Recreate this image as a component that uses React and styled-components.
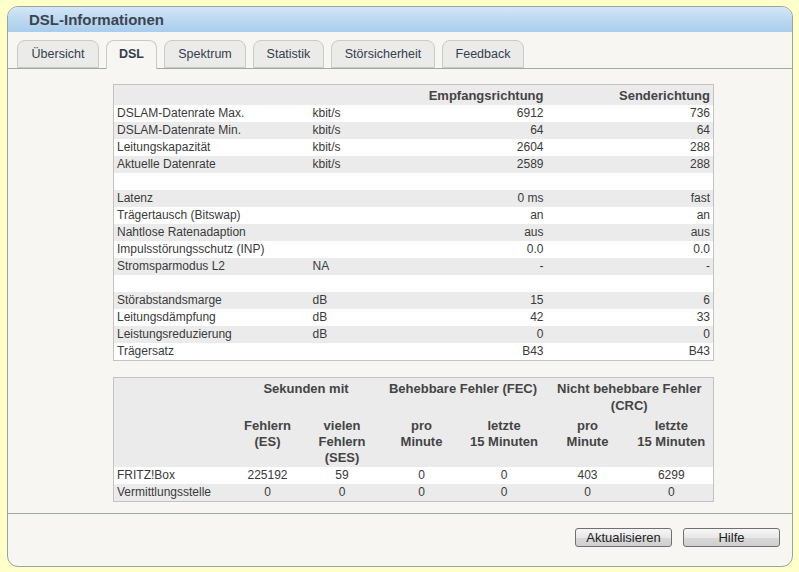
import React from 'react';
import styled, { createGlobalStyle } from 'styled-components';

const GlobalStyle = createGlobalStyle`
  html, body {
    margin: 0;
    padding: 0;
    background: #ffffc9;
    font-family: "Liberation Sans", Arial, sans-serif;
  }
`;

const tabs = ['Übersicht', 'DSL', 'Spektrum', 'Statistik', 'Störsicherheit', 'Feedback'];
const tabWidths = [82, 51, 82, 71, 104, 82];

const mainRows = [
  { label: 'DSLAM-Datenrate Max.', unit: 'kbit/s', rx: '6912', tx: '736' },
  { label: 'DSLAM-Datenrate Min.', unit: 'kbit/s', rx: '64', tx: '64' },
  { label: 'Leitungskapazität', unit: 'kbit/s', rx: '2604', tx: '288' },
  { label: 'Aktuelle Datenrate', unit: 'kbit/s', rx: '2589', tx: '288' },
  { label: '', unit: '', rx: '', tx: '' },
  { label: 'Latenz', unit: '', rx: '0 ms', tx: 'fast' },
  { label: 'Trägertausch (Bitswap)', unit: '', rx: 'an', tx: 'an' },
  { label: 'Nahtlose Ratenadaption', unit: '', rx: 'aus', tx: 'aus' },
  { label: 'Impulsstörungsschutz (INP)', unit: '', rx: '0.0', tx: '0.0' },
  { label: 'Stromsparmodus L2', unit: 'NA', rx: '-', tx: '-' },
  { label: '', unit: '', rx: '', tx: '' },
  { label: 'Störabstandsmarge', unit: 'dB', rx: '15', tx: '6' },
  { label: 'Leitungsdämpfung', unit: 'dB', rx: '42', tx: '33' },
  { label: 'Leistungsreduzierung', unit: 'dB', rx: '0', tx: '0' },
  { label: 'Trägersatz', unit: '', rx: 'B43', tx: 'B43' },
];

const errorRows = [
  { label: 'FRITZ!Box', values: ['225192', '59', '0', '0', '403', '6299'] },
  { label: 'Vermittlungsstelle', values: ['0', '0', '0', '0', '0', '0'] },
];

const App = () => {
  return (
    <>
      <GlobalStyle />
      <Frame>
        <Header>DSL-Informationen</Header>
        <TabBar>
          {tabs.map((t, i) => (
            <Tab key={t} active={t === 'DSL'} w={tabWidths[i]}>{t}</Tab>
          ))}
        </TabBar>
        <Content>
          <DataTable>
            <colgroup>
              <col style={{ width: 196 }} />
              <col style={{ width: 100 }} />
              <col style={{ width: 137 }} />
              <col style={{ width: 167 }} />
            </colgroup>
            <thead>
              <tr>
                <HeadCell />
                <HeadCell />
                <HeadCell align="right">Empfangsrichtung</HeadCell>
                <HeadCell align="right">Senderichtung</HeadCell>
              </tr>
            </thead>
            <tbody>
              {mainRows.map((r, i) => (
                <Row key={i} odd={i % 2 === 1}>
                  <Cell>{r.label}</Cell>
                  <Cell>{r.unit}</Cell>
                  <Cell align="right">{r.rx}</Cell>
                  <Cell align="right">{r.tx}</Cell>
                </Row>
              ))}
            </tbody>
          </DataTable>

          <ErrorTable>
            <colgroup>
              <col style={{ width: 118 }} />
              <col style={{ width: 72 }} />
              <col style={{ width: 77 }} />
              <col style={{ width: 82 }} />
              <col style={{ width: 83 }} />
              <col style={{ width: 84 }} />
              <col style={{ width: 84 }} />
            </colgroup>
            <thead>
              <GroupRow>
                <GroupCell />
                <GroupCell colSpan={2}>Sekunden mit</GroupCell>
                <GroupCell colSpan={2}>Behebbare Fehler (FEC)</GroupCell>
                <GroupCell colSpan={2}>Nicht behebbare Fehler (CRC)</GroupCell>
              </GroupRow>
              <SubRow>
                <SubCell />
                <SubCell>Fehlern<br />(ES)</SubCell>
                <SubCell>vielen<br />Fehlern<br />(SES)</SubCell>
                <SubCell>pro<br />Minute</SubCell>
                <SubCell>letzte<br />15 Minuten</SubCell>
                <SubCell>pro<br />Minute</SubCell>
                <SubCell>letzte<br />15 Minuten</SubCell>
              </SubRow>
            </thead>
            <tbody>
              {errorRows.map((r, i) => (
                <Row key={r.label} odd={i % 2 === 1}>
                  <Cell>{r.label}</Cell>
                  {r.values.map((v, j) => (
                    <Cell key={j} align="center">{v}</Cell>
                  ))}
                </Row>
              ))}
            </tbody>
          </ErrorTable>
        </Content>
        <Footer>
          <Button>Aktualisieren</Button>
          <Button>Hilfe</Button>
        </Footer>
      </Frame>
    </>
  );
};

const Frame = styled.div`
  box-sizing: border-box;
  margin: 6px 0 0 7px;
  width: 786px;
  height: 561px;
  border: 1px solid #97a59f;
  border-radius: 11px;
  background: #f7f6f2;
  overflow: hidden;
  display: flex;
  flex-direction: column;
`;

const Header = styled.div`
  height: 25px;
  padding-left: 21px;
  background: linear-gradient(to bottom, #d3e6f7 0%, #b8d6f1 60%, #a9cdee 100%);
  color: #3b4550;
  font-weight: bold;
  font-size: 15px;
  line-height: 25px;
`;

const TabBar = styled.div`
  display: flex;
  align-items: flex-end;
  gap: 7px;
  height: 36px;
  padding-left: 9px;
  border-bottom: 1px solid #9eaaa4;
`;

const Tab = styled.div`
  box-sizing: border-box;
  width: ${p => p.w}px;
  height: ${p => (p.active ? 29 : 28)}px;
  margin-bottom: ${p => (p.active ? -1 : 0)}px;
  border: 1px solid #c9cbc8;
  border-bottom: ${p => (p.active ? 'none' : '1px solid #c9cbc8')};
  border-radius: 8px 8px 0 0;
  background: ${p => (p.active ? '#f7f6f2' : '#ebebea')};
  color: #34404c;
  font-size: 12.5px;
  font-weight: ${p => (p.active ? 'bold' : 'normal')};
  text-align: center;
  line-height: 27px;
`;

const Content = styled.div`
  padding: 15px 0 11px 105px;
  display: flex;
  flex-direction: column;
  gap: 16px;
`;

const DataTable = styled.table`
  width: 600px;
  table-layout: fixed;
  border-collapse: collapse;
  border: 1px solid #c3c3c0;
  font-size: 12px;
  color: #3a3a3a;
`;

const HeadCell = styled.th`
  height: 20px;
  padding: 0 3px;
  background: #ebebeb;
  text-align: ${p => p.align || 'left'};
  font-size: 13px;
  color: #444;
  font-weight: bold;
  line-height: 19px;
`;

const Row = styled.tr`
  background: ${p => (p.odd ? '#ebebeb' : '#ffffff')};
`;

const Cell = styled.td`
  height: 17px;
  padding: 0 3px;
  text-align: ${p => p.align || 'left'};
  line-height: 17px;
  white-space: nowrap;
`;

const ErrorTable = styled(DataTable)``;

const GroupRow = styled.tr`
  background: #ebebeb;
`;

const GroupCell = styled.th`
  padding: 2px 4px 0;
  height: 32px;
  vertical-align: top;
  text-align: center;
  font-size: 13px;
  font-weight: bold;
  color: #444;
  line-height: 17px;
`;

const SubRow = styled.tr`
  background: #ebebeb;
`;

const SubCell = styled.th`
  padding: 4px 2px 1px;
  vertical-align: top;
  text-align: center;
  font-size: 13px;
  font-weight: bold;
  color: #444;
  line-height: 16px;
`;

const Footer = styled.div`
  flex: 1;
  display: flex;
  justify-content: flex-end;
  align-items: flex-start;
  gap: 11px;
  padding: 14px 12px 0 0;
  border-top: 1px solid #9eaaa4;
`;

const Button = styled.button`
  box-sizing: border-box;
  width: 97px;
  height: 19px;
  padding: 0;
  border: 1px solid #707070;
  border-radius: 3px;
  background: linear-gradient(to bottom, #f6f6f6 0%, #e8e8e8 50%, #d9d9d9 51%, #cfcfcf 100%);
  font-family: "Liberation Sans", Arial, sans-serif;
  font-size: 13px;
  color: #222;
  line-height: 17px;
`;

export default App;
